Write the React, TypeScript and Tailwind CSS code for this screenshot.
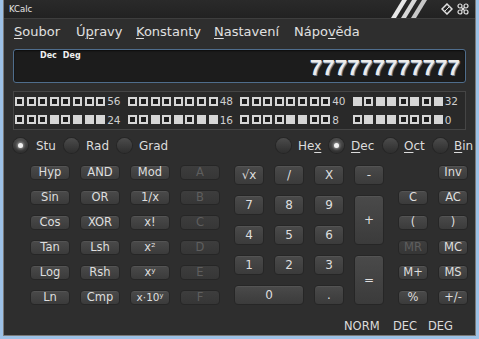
import React from "react";

const FONT = { fontFamily: '"DejaVu Sans", "Noto Sans", sans-serif' };

type BP = { label: React.ReactNode; disabled?: boolean; className?: string };

function Btn({ label, disabled, className }: BP) {
  return (
    <div
      className={
        "flex items-center justify-center rounded-[4px] border border-[#262626] leading-none " +
        (disabled
          ? "bg-gradient-to-b from-[#3d3d3d] to-[#363636] text-[#5e5e5e] "
          : "bg-gradient-to-b from-[#4a4a4a] to-[#3b3b3b] text-[#dedede] shadow-[inset_0_1px_0_rgba(255,255,255,0.06)] ") +
        (className || "")
      }
    >
      {label}
    </div>
  );
}

function Radio({ checked }: { checked?: boolean }) {
  return (
    <div className="flex h-[15px] w-[15px] items-center justify-center rounded-full bg-gradient-to-b from-[#4c4c4c] to-[#2e2e2e] shadow-[0_0_0_1px_#262626]">
      {checked && (
        <div className="h-[5px] w-[5px] rounded-full bg-[#f2f2f2] shadow-[0_0_3px_1px_rgba(255,255,255,0.5)]" />
      )}
    </div>
  );
}

function U({ children }: { children: React.ReactNode }) {
  return <span className="underline underline-offset-[2px] decoration-1">{children}</span>;
}

const bits = (() => {
  const v = 777777777777n;
  const arr: number[] = [];
  for (let i = 63; i >= 0; i--) arr.push(Number((v >> BigInt(i)) & 1n));
  return arr;
})();

function BitGroup({ start, label }: { start: number; label: string }) {
  const b = bits.slice(start, start + 8);
  return (
    <div className="flex w-[114px] items-center">
      <div className="flex gap-[2.6px]">
        {b.map((x, i) =>
          x ? (
            <div key={i} className="h-[9px] w-[9px] bg-[#d6d6d6]" />
          ) : (
            <div key={i} className="h-[9px] w-[9px] border-2 border-[#d6d6d6] bg-[#1d1d1d]" />
          )
        )}
      </div>
      <span className="ml-[2px] text-[10.5px] leading-none text-[#d0d0d0]">{label}</span>
    </div>
  );
}

export default function App() {
  return (
    <div className="relative h-[339px] w-[479px] overflow-hidden bg-[#9dc1e6]" style={FONT}>
      <div className="ml-[3px] flex h-[336px] w-[473px] flex-col border-x border-b border-[#7a7a7a] bg-[#2e2e2e]">
        {/* title bar */}
        <div className="flex h-[19px] items-center border-b border-[#3e3e3e] bg-gradient-to-b from-[#2a2a2a] to-[#222222]">
          <span className="ml-[5px] text-[8.5px] leading-none text-[#e6e6e6]">KCalc</span>
          <div className="ml-auto flex items-center">
            <svg width="44" height="18" viewBox="0 0 44 18" className="mr-[6px]">
              <polygon points="0,18 5,18 16,0 11,0" fill="#e8e8e8" />
              <polygon points="10,18 15,18 26,0 21,0" fill="#d8d8d8" />
              <polygon points="20,18 25,18 36,0 31,0" fill="#c8c8c8" />
            </svg>
            <svg width="12" height="12" viewBox="0 0 12 12" className="mr-[4px]">
              <polygon points="6,1 11,6 6,11 1,6" fill="none" stroke="#e0e0e0" strokeWidth="1.5" />
              <line x1="3.5" y1="8.5" x2="8.5" y2="3.5" stroke="#e0e0e0" strokeWidth="1" />
            </svg>
            <svg width="12" height="12" viewBox="0 0 12 12" className="mr-[6px]">
              <circle cx="3" cy="3" r="2" fill="none" stroke="#e0e0e0" strokeWidth="1.2" />
              <circle cx="9" cy="3" r="2" fill="none" stroke="#e0e0e0" strokeWidth="1.2" />
              <circle cx="3" cy="9" r="2" fill="none" stroke="#e0e0e0" strokeWidth="1.2" />
              <circle cx="9" cy="9" r="2" fill="none" stroke="#e0e0e0" strokeWidth="1.2" />
              <line x1="4.5" y1="4.5" x2="7.5" y2="7.5" stroke="#e0e0e0" strokeWidth="1.2" />
              <line x1="7.5" y1="4.5" x2="4.5" y2="7.5" stroke="#e0e0e0" strokeWidth="1.2" />
            </svg>
          </div>
        </div>

        {/* menu */}
        <div className="flex h-[25px] items-center pl-[10px] text-[13px] leading-none text-[#e0e0e0]">
          <span className="w-[62px]"><U>S</U>oubor</span>
          <span className="w-[60px]">Ú<U>p</U>ravy</span>
          <span className="w-[78px]"><U>K</U>onstanty</span>
          <span className="w-[80px]"><U>N</U>astavení</span>
          <span>Nápo<U>v</U>ěda</span>
        </div>

        {/* display */}
        <div className="mx-[9px] mt-[5px] flex h-[34px] flex-col rounded-[3px] border border-[#4f6d8c] bg-[#1c1c1c] px-[5px] shadow-[inset_0_1px_2px_rgba(0,0,0,0.6)]">
          <div className="ml-[21px] mt-[2px] flex gap-[6px] text-[8px] font-bold leading-none text-[#f0f0f0]">
            <span>Dec</span>
            <span>Deg</span>
          </div>
          <div
            className="-mt-[3px] text-right text-[22.5px] font-bold leading-none text-[#ececec] [text-shadow:1px_1px_0_#6d7f95]"
            style={{ fontFamily: '"Liberation Sans", Arial, sans-serif' }}
          >
            777777777777
          </div>
        </div>

        {/* bits */}
        <div className="mx-[9px] mt-[8px] flex h-[39px] flex-col justify-center gap-[8px] border border-[#454545] bg-[#292929] pl-[1px]">
          <div className="flex">
            <BitGroup start={0} label="56" />
            <BitGroup start={8} label="48" />
            <BitGroup start={16} label="40" />
            <BitGroup start={24} label="32" />
          </div>
          <div className="flex">
            <BitGroup start={32} label="24" />
            <BitGroup start={40} label="16" />
            <BitGroup start={48} label="8" />
            <BitGroup start={56} label="0" />
          </div>
        </div>

        {/* radios */}
        <div className="mt-[8px] flex h-[15px] items-center pl-[9px] text-[12px] leading-none text-[#dcdcdc]">
          <div className="flex w-[263px] items-center">
            <Radio checked />
            <span className="ml-[8px] w-[28px]">Stu</span>
            <Radio />
            <span className="ml-[7px] w-[31px]">Rad</span>
            <Radio />
            <span className="ml-[7px]">Grad</span>
          </div>
          <div className="flex items-center">
            <Radio />
            <span className="ml-[7px] w-[31px]">He<U>x</U></span>
            <Radio checked />
            <span className="ml-[7px] w-[32px]"><U>D</U>ec</span>
            <Radio />
            <span className="ml-[6px] w-[29px]"><U>O</U>ct</span>
            <Radio />
            <span className="ml-[6px]"><U>B</U>in</span>
          </div>
        </div>

        {/* buttons */}
        <div className="mt-[12px] flex pl-[26px] text-[11.5px]">
          <div className="grid grid-cols-[repeat(4,40px)] grid-rows-[repeat(6,15px)] gap-[10px]">
            <Btn label="Hyp" />
            <Btn label="AND" />
            <Btn label="Mod" />
            <Btn label="A" disabled />
            <Btn label="Sin" />
            <Btn label="OR" />
            <Btn label="1/x" />
            <Btn label="B" disabled />
            <Btn label="Cos" />
            <Btn label="XOR" />
            <Btn label="x!" />
            <Btn label="C" disabled />
            <Btn label="Tan" />
            <Btn label="Lsh" />
            <Btn label={<span>x²</span>} />
            <Btn label="D" disabled />
            <Btn label="Log" />
            <Btn label="Rsh" />
            <Btn label={<span>xʸ</span>} />
            <Btn label="E" disabled />
            <Btn label="Ln" />
            <Btn label="Cmp" />
            <Btn label={<span className="text-[10.5px]">x·10ʸ</span>} />
            <Btn label="F" disabled />
          </div>

          <div className="ml-[14px] grid grid-cols-[repeat(4,30px)] grid-rows-[repeat(5,20px)] gap-[10px] text-[12px]">
            <Btn label="√x" />
            <Btn label="/" />
            <Btn label="X" />
            <Btn label="-" />
            <Btn label="7" />
            <Btn label="8" />
            <Btn label="9" />
            <Btn label="+" className="row-span-2" />
            <Btn label="4" />
            <Btn label="5" />
            <Btn label="6" />
            <Btn label="1" />
            <Btn label="2" />
            <Btn label="3" />
            <Btn label="=" className="row-span-2" />
            <Btn label="0" className="col-span-2" />
            <Btn label="." />
          </div>

          <div className="ml-[14px] grid grid-cols-[repeat(2,30px)] grid-rows-[repeat(6,15px)] gap-[10px]">
            <div />
            <Btn label="Inv" />
            <Btn label="C" />
            <Btn label="AC" />
            <Btn label="(" />
            <Btn label=")" />
            <Btn label="MR" disabled />
            <Btn label="MC" />
            <Btn label="M+" />
            <Btn label="MS" />
            <Btn label="%" />
            <Btn label="+/-" />
          </div>
        </div>

        {/* status */}
        <div className="mt-[16px] flex pl-[340px] text-[11.5px] leading-none text-[#dcdcdc]">
          <span className="w-[49px]">NORM</span>
          <span className="w-[35px]">DEC</span>
          <span>DEG</span>
        </div>
      </div>
    </div>
  );
}
